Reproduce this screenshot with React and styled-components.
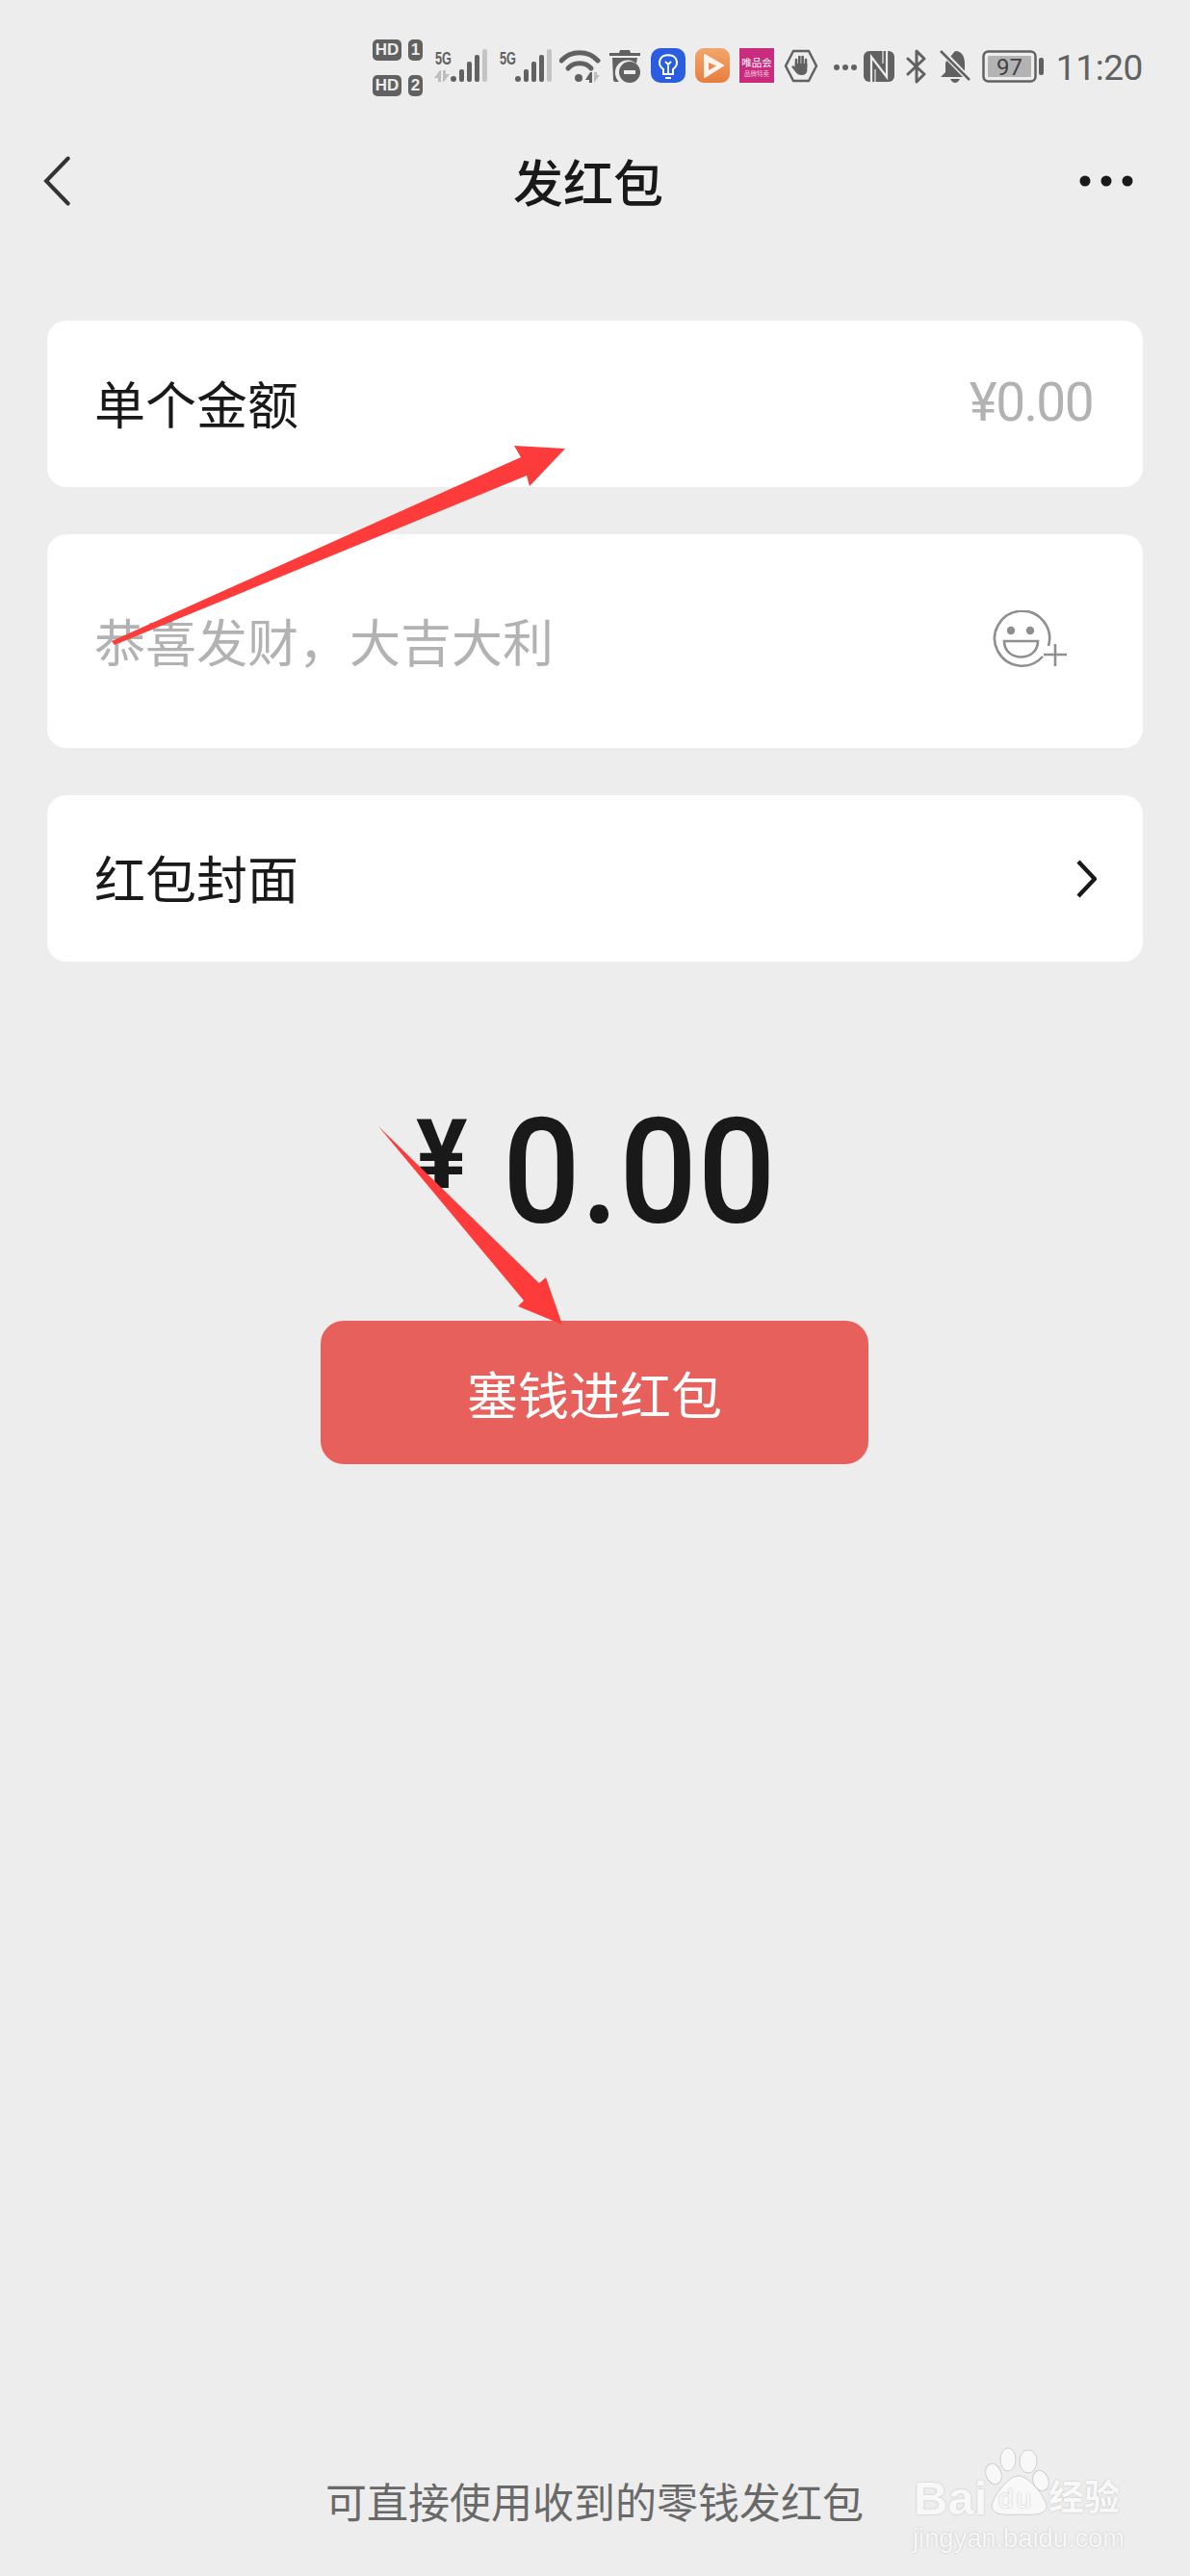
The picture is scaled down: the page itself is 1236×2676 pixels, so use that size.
import styled, { createGlobalStyle } from "styled-components";

const GlobalStyle = createGlobalStyle`
  html, body {
    margin: 0;
    padding: 0;
    background: #ededed;
  }
  body {
    font-family: "Noto Sans CJK SC", "Noto Sans", sans-serif;
  }
`;

const Page = styled.div`
  position: relative;
  width: 1236px;
  height: 2676px;
  overflow: hidden;
  background: #ededed;
  display: flex;
  flex-direction: column;
`;

const StatusBar = styled.div`
  height: 120px;
  box-sizing: border-box;
  padding: 40px 49px 0 387px;
  display: flex;
  align-items: flex-start;
  color: #616161;
`;

const StatusIcon = styled.svg`
  flex: none;
  margin-left: ${(p) => p.$gap || 0}px;
  margin-top: ${(p) => p.$top || 0}px;
  display: block;
`;

const Clock = styled.span`
  margin-left: auto;
  margin-top: 9px;
  font: 400 37px/44px Roboto, sans-serif;
  letter-spacing: -0.4px;
  color: #616161;
`;

const NavBar = styled.div`
  height: 136px;
  padding: 0 59px 0 43px;
  display: flex;
  align-items: center;
  justify-content: space-between;
`;

const NavTitle = styled.h1`
  margin: 0 0 0 26px;
  font-size: 52px;
  line-height: 70px;
  font-weight: 500;
  color: #191919;
`;

const Form = styled.div`
  margin-top: 77px;
  padding: 0 49px;
  display: flex;
  flex-direction: column;
  gap: 49px;
`;

const Card = styled.div`
  height: ${(p) => p.$height}px;
  box-sizing: border-box;
  padding-left: 49px;
  padding-right: ${(p) => p.$right}px;
  background: #fff;
  border-radius: 20px;
  display: flex;
  align-items: ${(p) => (p.$top ? "flex-start" : "center")};
  justify-content: space-between;
`;

const Label = styled.span`
  font-size: 53px;
  line-height: 70px;
  color: ${(p) => (p.$muted ? "#b2b2b2" : "#191919")};
  margin-top: ${(p) => p.$top ?? -3}px;
`;

const Hint = styled.span`
  font: 400 55px/70px Roboto, sans-serif;
  letter-spacing: -1.6px;
  margin-top: -3px;
  color: #b2b2b2;
`;

const SmileIcon = styled.svg`
  margin-top: 79px;
  flex: none;
`;

const Amount = styled.div`
  margin-top: 154px;
  margin-left: 432px;
  height: 130px;
  display: flex;
  align-items: flex-start;
  color: #191919;
  font-family: Roboto, sans-serif;
  font-weight: 500;
`;

const Yen = styled.span`
  font-size: 100px;
  line-height: 100px;
  font-weight: 700;
  margin-top: -3px;
`;

const Digits = styled.span`
  margin-left: 36px;
  font-size: 153px;
  line-height: 130px;
  letter-spacing: 0.5px;
  transform: scaleX(0.93);
  transform-origin: left center;
`;

const SendButton = styled.div`
  margin: 89px 0 0 333px;
  width: 569px;
  height: 149px;
  border-radius: 24px;
  background: #e8605b;
  color: #fff;
  font-size: 53px;
  display: flex;
  align-items: center;
  justify-content: center;
`;

const Footer = styled.div`
  margin-top: auto;
  margin-left: 338px;
  padding-bottom: 50px;
  font-size: 43px;
  line-height: 58px;
  color: #696969;
`;

const Watermark = styled.div`
  position: absolute;
  left: 930px;
  top: 2520px;
  width: 260px;
  height: 156px;
`;

const PawIcon = styled.svg`
  position: absolute;
  left: 0;
  top: 0;
`;

const WatermarkText = styled.div`
  position: absolute;
  left: ${(p) => p.$x}px;
  top: ${(p) => p.$y}px;
  font-family: ${(p) => (p.$cjk ? '"Noto Sans CJK SC"' : '"Liberation Sans"')}, sans-serif;
  font-size: ${(p) => p.$size}px;
  font-weight: ${(p) => p.$weight || 400};
  letter-spacing: ${(p) => p.$spacing || 0}px;
  line-height: 1.15;
  color: #f8f8f8;
  text-shadow: 0 0 2px #b8b8b8;
  white-space: nowrap;
`;

const Overlay = styled.svg`
  position: absolute;
  left: 0;
  top: 0;
  pointer-events: none;
`;

const HdRow = styled.div`
  display: flex;
  gap: 7px;
  align-items: center;
`;

const HdStack = styled.div`
  flex: none;
  display: flex;
  flex-direction: column;
  gap: 15px;
  margin-top: 1px;
`;

const HdBadge = styled.span`
  width: ${(p) => p.$w}px;
  height: 22px;
  border-radius: 5px;
  background: #616161;
  color: #ededed;
  font: 700 17px/22px "Liberation Sans", sans-serif;
  text-align: center;
`;

const Tiny = styled.text`
  font-family: "Liberation Sans", sans-serif;
  font-weight: 700;
`;

const AppLabel = styled.text`
  font-family: "Noto Sans CJK SC", sans-serif;
  font-weight: 400;
`;

const Signal = ({ gap, arrows }) => (
  <StatusIcon $gap={gap} $top={11} width="55" height="36" viewBox="0 0 55 36">
    <Tiny x="1" y="16" fontSize="19" fill="#616161" textLength="17" lengthAdjust="spacingAndGlyphs">5G</Tiny>
    <circle cx="20" cy="31" r="3" fill="#616161" />
    <rect x="26" y="21" width="5" height="13" rx="2" fill="#616161" />
    <rect x="34" y="13" width="5" height="21" rx="2" fill="#616161" />
    <rect x="42" y="6" width="5" height="28" rx="2" fill="#616161" />
    <rect x="50" y="0" width="5" height="34" rx="2" fill="#c4c4c4" />
    {arrows && (
      <path d="M6 22 L0 30 H4 V34 H7 V22 Z M10 34 L16 26 H12 V22 H9 V34 Z" fill="#bdbdbd" />
    )}
  </StatusIcon>
);

const App = () => (
  <Page>
    <GlobalStyle />
    <StatusBar>
      <HdStack>
        <HdRow>
          <HdBadge $w={30}>HD</HdBadge>
          <HdBadge $w={15}>1</HdBadge>
        </HdRow>
        <HdRow>
          <HdBadge $w={30}>HD</HdBadge>
          <HdBadge $w={15}>2</HdBadge>
        </HdRow>
      </HdStack>
      <Signal gap={12} arrows />
      <Signal gap={12} />
      {/* wifi */}
      <StatusIcon $gap={8} $top={11} width="44" height="36" viewBox="0 0 44 36" fill="none">
        <path d="M2 12 C12 1 30 1 40 12" stroke="#616161" strokeWidth="5" strokeLinecap="round" />
        <path d="M9 20 C15 13 27 13 33 20" stroke="#616161" strokeWidth="5" strokeLinecap="round" />
        <circle cx="20" cy="30" r="4" fill="#616161" />
        <path d="M32 24 L27 32 H31 V35 H34 V24 Z" fill="#616161" />
        <path d="M36 35 L42 27 H39 V24 H36 V35 Z" fill="#bdbdbd" />
      </StatusIcon>
      {/* recycle bin with minus */}
      <StatusIcon $gap={7} $top={12} width="34" height="36" viewBox="0 0 34 36">
        <path d="M12 0 H22 L23 3 H33 V6 H1 V3 H11 Z" fill="#616161" />
        <path d="M4 8 H30 L29 14 A12 12 0 0 0 11 33 H7 Q5 33 5 31 Z" fill="#616161" />
        <circle cx="22" cy="23" r="11" fill="#616161" />
        <rect x="16" y="21" width="12" height="4" fill="#ededed" />
      </StatusIcon>
      {/* bulb app */}
      <StatusIcon $gap={10} $top={10} width="36" height="36" viewBox="0 0 36 36" fill="none">
        <rect width="36" height="36" rx="10" fill="#2a5de0" />
        <path d="M13 22 C9 19 8 15 10 11 C13 6 23 6 26 11 C28 15 27 19 23 22 V27 H13 Z" stroke="#fff" strokeWidth="2" />
        <path d="M15 31 H21 M18 15 V26 M15 14 L18 17 L21 14" stroke="#fff" strokeWidth="1.8" />
      </StatusIcon>
      {/* video app */}
      <StatusIcon $gap={10} $top={10} width="36" height="36" viewBox="0 0 36 36">
        <defs>
          <linearGradient id="videoApp" x1="0" y1="0" x2="0" y2="1">
            <stop offset="0" stopColor="#f2a76b" />
            <stop offset="1" stopColor="#e77d3f" />
          </linearGradient>
        </defs>
        <rect width="36" height="36" rx="9" fill="url(#videoApp)" />
        <path d="M10 7 L29 18 L10 30 Z" fill="#fff" opacity="0.9" stroke="#fff" strokeWidth="2" strokeLinejoin="round" />
        <path d="M14 15 L22 18.5 L14 23 Z" fill="#ec8b4f" />
      </StatusIcon>
      {/* vip app */}
      <StatusIcon $gap={10} $top={10} width="36" height="36" viewBox="0 0 36 36">
        <rect width="36" height="36" fill="#c92c7e" />
        <AppLabel x="18" y="19" fontSize="10.5" fill="#fff" textAnchor="middle">唯品会</AppLabel>
        <AppLabel x="18" y="29" fontSize="6.5" fill="#f2c4dc" textAnchor="middle">品牌特卖</AppLabel>
      </StatusIcon>
      {/* hand in hexagon */}
      <StatusIcon $gap={10} $top={11} width="36" height="35" viewBox="0 0 36 35" fill="none">
        <path d="M10 2 H26 L34 17.5 L26 33 H10 L2 17.5 Z" stroke="#616161" strokeWidth="2.5" strokeLinejoin="round" />
        <path d="M13 19 V11 M16.3 18 V8 M19.6 18 V8 M23 19 V11" stroke="#616161" strokeWidth="2.6" strokeLinecap="round" />
        <path d="M11.7 15 H24.3 V22 C24.3 25 22 27 18.5 27 C15.5 27 14 26 12.5 24 L8.5 19 C8 17.6 9.6 16.8 10.6 17.6 L11.7 19 Z" fill="#616161" />
      </StatusIcon>
      <StatusIcon $gap={16} $top={26} width="24" height="8" viewBox="0 0 24 8">
        <circle cx="3" cy="4" r="3" fill="#616161" />
        <circle cx="12" cy="4" r="3" fill="#616161" />
        <circle cx="21" cy="4" r="3" fill="#616161" />
      </StatusIcon>
      {/* NFC */}
      <StatusIcon $gap={7} $top={13} width="32" height="32" viewBox="0 0 32 32" fill="none">
        <rect width="32" height="32" rx="6" fill="#616161" />
        <path d="M8 32 V6 L24 27 V0" stroke="#ededed" strokeWidth="2.2" />
        <path d="M12 32 V19 M20 0 V13" stroke="#ededed" strokeWidth="1.2" />
      </StatusIcon>
      {/* bluetooth with strike */}
      <StatusIcon $gap={12} $top={11} width="23" height="36" viewBox="0 0 23 36" fill="none">
        <path d="M2 10 L19 26 L11 34 V2 L19 10 L2 26" stroke="#616161" strokeWidth="3" strokeLinecap="round" strokeLinejoin="round" />
      </StatusIcon>
      {/* muted bell */}
      <StatusIcon $gap={12} $top={12} width="32" height="34" viewBox="0 0 32 34">
        <path d="M16 1 C24 1 26 8 26 14 V24 L30 28 H1 L6 23 V13 Z" fill="#616161" />
        <path d="M11 30 H21 Q19 34 16 34 Q13 34 11 30 Z" fill="#616161" />
        <path d="M0 -1 L33 33" stroke="#ededed" strokeWidth="6" />
        <path d="M1 1 L31 31" stroke="#616161" strokeWidth="2.5" />
      </StatusIcon>
      {/* battery */}
      <StatusIcon $gap={12} $top={12} width="64" height="34" viewBox="0 0 64 34">
        <rect x="1.5" y="1.5" width="54" height="31" rx="5" fill="none" stroke="#616161" strokeWidth="2.5" />
        <rect x="6" y="6" width="45" height="22" rx="1" fill="#b3b3b3" />
        <rect x="59" y="8" width="5" height="18" rx="2" fill="#616161" />
        <text x="28.5" y="26" fontSize="24" fontFamily="Roboto" textAnchor="middle" fill="#424242">97</text>
      </StatusIcon>
      <Clock>11:20</Clock>
    </StatusBar>

    <NavBar>
      <svg width="32" height="54" viewBox="0 0 32 54" fill="none">
        <path d="M27.7 3.5 L5 27 L27.7 50.5" stroke="#333" strokeWidth="4" strokeLinecap="round" />
      </svg>
      <NavTitle>发红包</NavTitle>
      <svg width="56" height="14" viewBox="0 0 56 14" fill="#191919">
        <circle cx="6" cy="7" r="5.5" />
        <circle cx="28" cy="7" r="5.5" />
        <circle cx="50" cy="7" r="5.5" />
      </svg>
    </NavBar>

    <Form>
      <Card $height={173} $right={52}>
        <Label>单个金额</Label>
        <Hint>¥0.00</Hint>
      </Card>
      <Card $height={222} $top $right={77}>
        <Label $muted $top={75}>恭喜发财，大吉大利</Label>
        <SmileIcon width="80" height="60" viewBox="0 0 80 60" fill="none">
          <path d="M53 48 A28.5 28.5 0 1 1 59 37" stroke="#8f8f8f" strokeWidth="2.6" />
          <circle cx="20" cy="21" r="4.2" fill="#8f8f8f" />
          <circle cx="40" cy="21" r="4.2" fill="#8f8f8f" />
          <path d="M13 32 H48 C48 54 13 54 13 32 Z" stroke="#8f8f8f" strokeWidth="2.6" />
          <path d="M54 46 H78 M66 35 V58" stroke="#8f8f8f" strokeWidth="2.6" />
        </SmileIcon>
      </Card>
      <Card $height={173} $right={48}>
        <Label>红包封面</Label>
        <svg width="24" height="42" viewBox="0 0 24 42" fill="none">
          <path d="M5 3 L22 21 L5 39" stroke="#191919" strokeWidth="4.4" />
        </svg>
      </Card>
    </Form>

    <Amount>
      <Yen>¥</Yen>
      <Digits>0.00</Digits>
    </Amount>
    <SendButton>塞钱进红包</SendButton>

    <Footer>可直接使用收到的零钱发红包</Footer>

    <Watermark>
      <PawIcon width="260" height="156" viewBox="0 0 260 156" fill="#f8f8f8" stroke="#cfcfcf" strokeWidth="1">
        <ellipse cx="117" cy="35" rx="8" ry="12" />
        <ellipse cx="138" cy="37" rx="9" ry="12" />
        <ellipse cx="102" cy="50" rx="8" ry="11" transform="rotate(-20 102 50)" />
        <ellipse cx="151" cy="57" rx="8" ry="11" transform="rotate(-20 151 57)" />
        <path d="M128 52 C140 52 158 78 157 84 C156 92 146 93 128 92 C110 93 102 92 100 84 C100 76 116 52 128 52 Z" />
      </PawIcon>
      <WatermarkText $x={19} $y={47} $size={49} $weight={700}>Bai</WatermarkText>
      <WatermarkText $x={107} $y={60} $size={28} $spacing={3}>du</WatermarkText>
      <WatermarkText $x={159} $y={51} $size={37} $weight={700} $cjk>经验</WatermarkText>
      <WatermarkText $x={18} $y={101} $size={27.3}>jingyan.baidu.com</WatermarkText>
    </Watermark>

    <Overlay width="1236" height="2676" viewBox="0 0 1236 2676">
      <path d="M116 666 L541 475 L534 463 L587 466 L550 505 L547 494 L119 670 Z" fill="#fd3b3b" />
      <path d="M393 1170 L560 1333 L567 1327 L584 1376 L538 1357 L544 1351 Z" fill="#fd3b3b" />
    </Overlay>
  </Page>
);

export default App;
